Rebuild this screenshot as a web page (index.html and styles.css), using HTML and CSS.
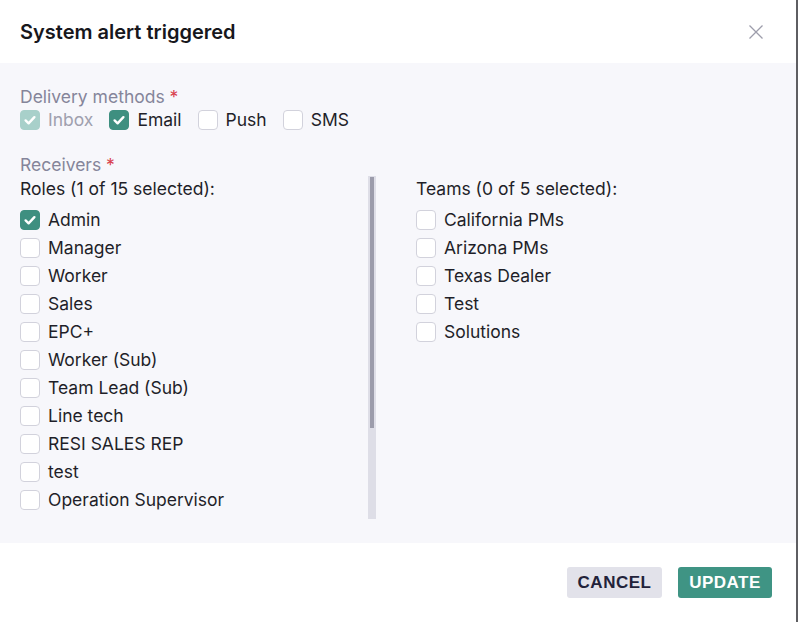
FILE: index.html
```html
<!DOCTYPE html>
<html lang="en">
<head>
<meta charset="utf-8">
<title>System alert triggered</title>
<link rel="stylesheet" href="styles.css">
</head>
<body>
<div class="modal">
  <header class="modal-header">
    <h1 class="modal-title">System alert triggered</h1>
    <button class="close-btn" aria-label="Close">
      <svg width="16" height="16" viewBox="0 0 16 16"><path d="M1.5 1.5 L14.5 14.5 M14.5 1.5 L1.5 14.5" stroke="#9d9dab" stroke-width="1.3" fill="none"/></svg>
    </button>
  </header>

  <section class="modal-body">
    <div class="field-label">Delivery methods <span class="req">*</span></div>
    <div class="method-row">
      <label class="check disabled"><span class="box on"><svg viewBox="0 0 20 20"><path d="M5.6 10.4 L8.6 13.3 L14.4 7.2" /></svg></span>Inbox</label>
      <label class="check"><span class="box on"><svg viewBox="0 0 20 20"><path d="M5.6 10.4 L8.6 13.3 L14.4 7.2" /></svg></span>Email</label>
      <label class="check"><span class="box"></span>Push</label>
      <label class="check"><span class="box"></span>SMS</label>
    </div>

    <div class="field-label receivers">Receivers <span class="req">*</span></div>
    <div class="columns">
      <div class="roles">
        <div class="roles-viewport">
          <div class="group-title">Roles (1 of 15 selected):</div>
          <ul class="opt-list">
            <li class="check"><span class="box on"><svg viewBox="0 0 20 20"><path d="M5.6 10.4 L8.6 13.3 L14.4 7.2" /></svg></span>Admin</li>
            <li class="check"><span class="box"></span>Manager</li>
            <li class="check"><span class="box"></span>Worker</li>
            <li class="check"><span class="box"></span>Sales</li>
            <li class="check"><span class="box"></span>EPC+</li>
            <li class="check"><span class="box"></span>Worker (Sub)</li>
            <li class="check"><span class="box"></span>Team Lead (Sub)</li>
            <li class="check"><span class="box"></span>Line tech</li>
            <li class="check"><span class="box"></span>RESI SALES REP</li>
            <li class="check"><span class="box"></span>test</li>
            <li class="check"><span class="box"></span>Operation Supervisor</li>
            <li class="check"><span class="box"></span>Installer</li>
            <li class="check"><span class="box"></span>Inspector</li>
            <li class="check"><span class="box"></span>Dispatcher</li>
            <li class="check"><span class="box"></span>Finance</li>
          </ul>
        </div>
        <div class="scroll-track"><div class="scroll-thumb"></div></div>
      </div>
      <div class="teams">
        <div class="group-title">Teams (0 of 5 selected):</div>
        <ul class="opt-list">
          <li class="check"><span class="box"></span>California PMs</li>
          <li class="check"><span class="box"></span>Arizona PMs</li>
          <li class="check"><span class="box"></span>Texas Dealer</li>
          <li class="check"><span class="box"></span>Test</li>
          <li class="check"><span class="box"></span>Solutions</li>
        </ul>
      </div>
    </div>
  </section>

  <footer class="modal-footer">
    <button class="btn btn-cancel">CANCEL</button>
    <button class="btn btn-update">UPDATE</button>
  </footer>
</div>
</body>
</html>
```
FILE: styles.css
```css
* { box-sizing: border-box; }

html, body {
  margin: 0;
  height: 622px;
  overflow: hidden;
}

body {
  background: #5e5e62;
  font-family: Inter, "Noto Sans", sans-serif;
  color: #1f1f29;
  font-size: 17.5px;
}

.modal {
  width: 796px;
  height: 622px;
  background: #fff;
  display: flex;
  flex-direction: column;
}

/* header */
.modal-header {
  height: 63px;
  flex: none;
  display: flex;
  align-items: center;
  justify-content: space-between;
  padding: 0 32px 0 20px;
}

.modal-title {
  margin: 0;
  font-size: 20px;
  font-weight: 600;
  color: #17171c;
}

.close-btn {
  border: 0;
  background: none;
  padding: 0;
  width: 16px;
  height: 16px;
  display: block;
}

.close-btn svg { display: block; }

/* body */
.modal-body {
  flex: 1;
  background: #f7f7fb;
  padding: 24px 20px;
  display: flex;
  flex-direction: column;
}

.field-label {
  line-height: 20px;
  color: #85859a;
}

.req { color: #d9414f; }

.method-row {
  display: flex;
  gap: 16px;
  margin-top: 3px;
  height: 20px;
}

.receivers { margin-top: 25px; }

.check {
  display: flex;
  align-items: center;
  gap: 8px;
  line-height: 20px;
  color: #1f1f29;
  white-space: nowrap;
}

.check.disabled { color: #a0a0ae; }

.box {
  width: 20px;
  height: 20px;
  flex: none;
  border: 1.5px solid #d2d2dc;
  border-radius: 4px;
  background: #fff;
  display: flex;
  align-items: center;
  justify-content: center;
}

.box.on {
  background: #3e8f80;
  border-color: #3e8f80;
}

.check.disabled .box.on {
  background: #a8d0ca;
  border-color: #a8d0ca;
}

.box svg {
  width: 20px;
  height: 20px;
  flex: none;
}

.box svg path {
  fill: none;
  stroke: #fff;
  stroke-width: 2.4;
  stroke-linecap: round;
  stroke-linejoin: round;
}

.columns {
  display: flex;
  gap: 40px;
  margin-top: 1px;
}

/* roles list with its scrollbar */
.roles {
  width: 356px;
  height: 343px;
  display: flex;
  align-items: flex-start;
}

.roles-viewport {
  flex: 1;
  height: 338px;
  overflow: hidden;
}

.scroll-track {
  width: 8px;
  height: 343px;
  background: #dedee7;
  padding: 1px 2px 0;
  flex: none;
}

.scroll-thumb {
  height: 251px;
  background: #9c9cab;
}

.group-title {
  padding-top: 3px;
  line-height: 20px;
  color: #1f1f29;
}

.opt-list {
  list-style: none;
  margin: 7px 0 0 0;
  padding: 0;
}

.opt-list .check {
  height: 28px;
}

/* footer */
.modal-footer {
  height: 79px;
  flex: none;
  display: flex;
  justify-content: flex-end;
  align-items: flex-start;
  gap: 16px;
  padding: 24px 24px 0 0;
}

.btn {
  border: 0;
  height: 31px;
  border-radius: 3px;
  font-family: "Liberation Sans", Arial, sans-serif;
  font-weight: 700;
  font-size: 17px;
  letter-spacing: 0.5px;
  padding: 0;
}

.btn-cancel {
  width: 95px;
  background: #e2e2ea;
  color: #22223a;
}

.btn-update {
  width: 94px;
  background: #3f9484;
  color: #fff;
}
```
